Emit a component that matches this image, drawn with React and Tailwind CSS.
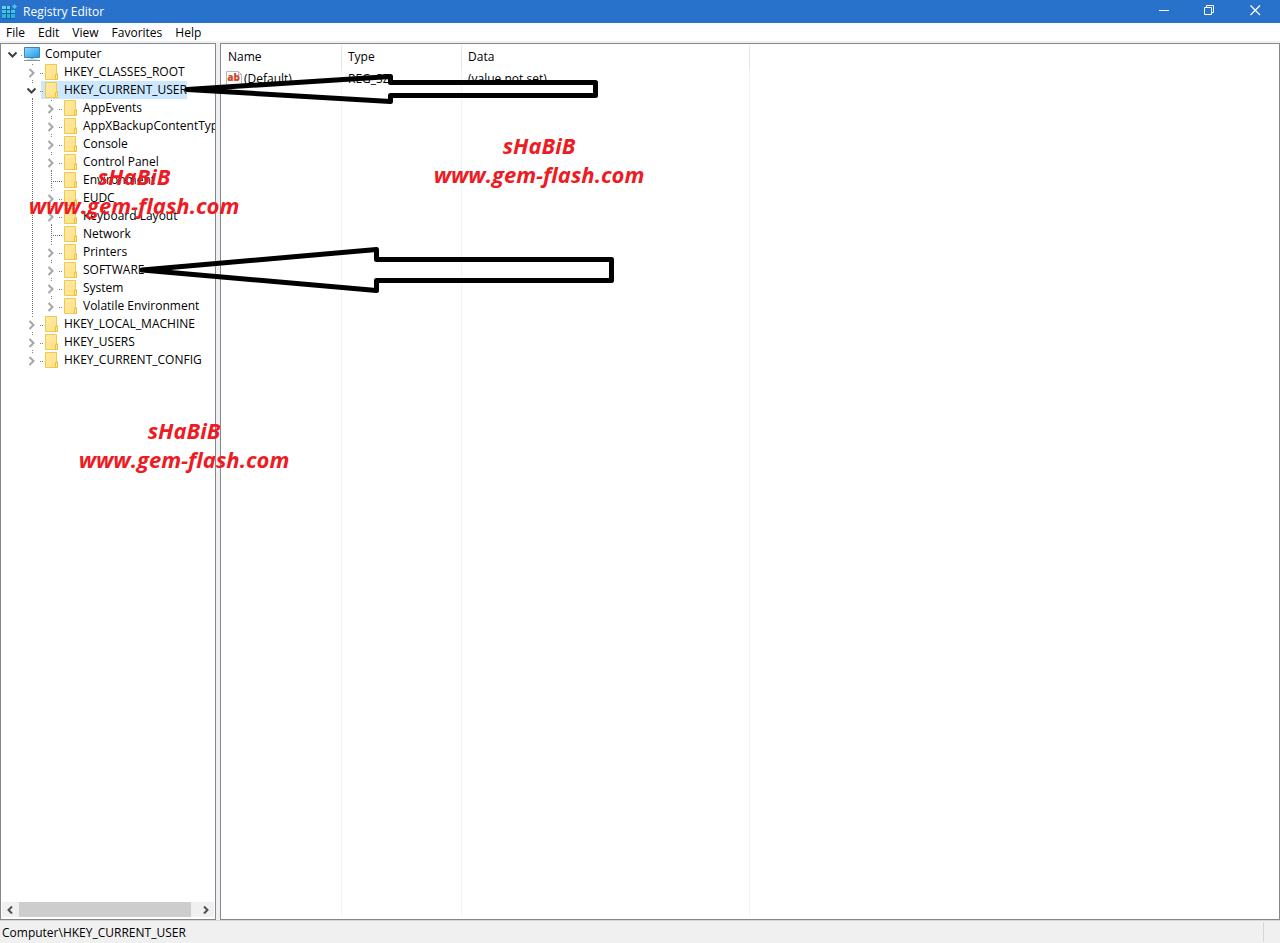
import { useState } from "react";

const CHILDREN = [
  ["AppEvents", true],
  ["AppXBackupContentTyp", true],
  ["Console", true],
  ["Control Panel", true],
  ["Environment", false],
  ["EUDC", true],
  ["Keyboard Layout", true],
  ["Network", false],
  ["Printers", true],
  ["SOFTWARE", true],
  ["System", true],
  ["Volatile Environment", true],
];

const ROWS = [
  { name: "Computer", level: 0, kind: "open" },
  { name: "HKEY_CLASSES_ROOT", level: 1, kind: "closed" },
  { name: "HKEY_CURRENT_USER", level: 1, kind: "open" },
  ...CHILDREN.map(([name, branch], i) => ({
    name,
    level: 2,
    kind: branch ? "closed" : "leaf",
    last: i === CHILDREN.length - 1,
  })),
  { name: "HKEY_LOCAL_MACHINE", level: 1, kind: "closed" },
  { name: "HKEY_USERS", level: 1, kind: "closed" },
  { name: "HKEY_CURRENT_CONFIG", level: 1, kind: "closed", last: true },
];

function RegistryLogo() {
  return (
    <svg className="size-4 shrink-0" viewBox="0 0 16 16" shapeRendering="crispEdges" aria-hidden="true">
      <path d="M1 2h9v4h4v9H1z" fill="#14649c" />
      <path d="M1 2h4v3H1zM6 2h3v3H6z" fill="#5fd3f3" />
      <path d="M1 6h4v3H1zM6 6h3v3H6zM10 6h4v3h-4z" fill="#45c2ea" />
      <path d="M1 10h4v4H1zM6 10h3v4H6zM10 10h4v4h-4z" fill="#2fb2e0" />
      <path d="M13 0h1v1h1v1h1v1h-1v1h-1v1h-1V4h-1V3h-1V2h1V1h1z" fill="#45c2ea" />
    </svg>
  );
}

function ComputerIcon() {
  return (
    <svg className="h-[18px] w-[23px] shrink-0" viewBox="0 0 23 18" aria-hidden="true">
      <defs>
        <linearGradient id="screen" x1="0" y1="0" x2="1" y2="1">
          <stop offset="0" stopColor="#8fdcfc" />
          <stop offset="1" stopColor="#1e9ae8" />
        </linearGradient>
      </defs>
      <path d="M2.500 2.500h15v10h-15z" fill="url(#screen)" stroke="#3a86b8" />
      <path d="M8 13h4v1H8z" fill="#a9bac6" />
      <path d="M5 14h10v1H5z" fill="#d3dde4" />
      <path d="M2 15h16v1H2z" fill="#7f99ab" />
    </svg>
  );
}

function FolderIcon() {
  return (
    <svg className="h-[18px] w-[23px] shrink-0" viewBox="0 0 23 18" aria-hidden="true">
      <defs>
        <linearGradient id="folder" x1="0" y1="0" x2="1" y2="1">
          <stop offset="0" stopColor="#ffeaa3" />
          <stop offset="1" stopColor="#ffdf85" />
        </linearGradient>
      </defs>
      <path d="M1 10h1v1H1z" fill="#808080" />
      <path d="M4.500 1.500h11v9h1v6h-12z" fill="url(#folder)" stroke="#efcb4d" />
      <path d="M14.500 11.500h2v5h-2z" fill="#ffe694" stroke="#e9c23f" />
    </svg>
  );
}

function Guide({ kind, last, level }) {
  return (
    <svg className="h-[18px] w-[19px] shrink-0" viewBox="0 0 19 18" aria-hidden="true">
      {kind === "line" && <path d="M10.500 0v18" stroke="#6b6b6b" strokeDasharray="1 1" fill="none" />}
      {kind === "leaf" && (
        <g stroke="#6b6b6b" strokeDasharray="1 1" fill="none">
          <path d="M10.500 0v18" />
          <path d="M10 10.500h9" />
        </g>
      )}
      {(kind === "open" || kind === "closed") && (
        <g fill="#808080">
          <path d="M18 10h1v1h-1z" />
          {level > 0 && <path d="M10 1h1v1h-1z" />}
          {level > 0 && !last && <path d="M10 17h1v1h-1z" />}
        </g>
      )}
      {kind === "closed" && <path d="M7.500 6 11.500 10l-4 4" fill="none" stroke="#a6a6a6" strokeWidth="2" />}
      {kind === "open" && <path d="M5.500 7.500 9.500 11.500l4-4" fill="none" stroke="#404040" strokeWidth="2" />}
    </svg>
  );
}

function TreeRow({ row, selected, onSelect }) {
  return (
    <li role="treeitem" aria-selected={selected} className="flex h-[18px] items-center">
      {row.level > 0 && <span className="w-[19px] shrink-0" />}
      {row.level > 1 && <Guide kind="line" />}
      {row.kind === "leaf" ? (
        <Guide kind="leaf" />
      ) : (
        <button type="button" aria-label={"Toggle " + row.name} className="shrink-0">
          <Guide kind={row.kind} last={row.last} level={row.level} />
        </button>
      )}
      <button
        type="button"
        onClick={onSelect}
        className={"flex h-[18px] shrink-0 items-center whitespace-nowrap " + (selected ? "bg-[#cce8ff]" : "")}
      >
        {row.level === 0 ? <ComputerIcon /> : <FolderIcon />}
        {row.name}
      </button>
    </li>
  );
}

function TreePanel() {
  const [selected, setSelected] = useState("HKEY_CURRENT_USER");
  return (
    <nav aria-label="Registry keys" className="flex w-[216px] shrink-0 flex-col border border-[#828790] bg-white">
      <ul role="tree" className="min-h-0 flex-1 overflow-hidden pt-px pl-[2px]">
        {ROWS.map((row) => (
          <TreeRow key={row.name} row={row} selected={row.name === selected} onSelect={() => setSelected(row.name)} />
        ))}
      </ul>
      <div className="mx-px mb-[2px] flex h-[15px] bg-[#f0f0f0]">
        <button type="button" aria-label="Scroll left" className="flex w-[17px] items-center pl-1">
          <svg className="size-2" viewBox="0 0 8 8">
            <path d="M6 .5 2.500 4 6 7.500" fill="none" stroke="#505050" strokeWidth="2" />
          </svg>
        </button>
        <div className="flex-1">
          <div className="h-full w-[172px] bg-[#cdcdcd]" />
        </div>
        <button type="button" aria-label="Scroll right" className="flex w-[17px] items-center justify-center">
          <svg className="size-2" viewBox="0 0 8 8">
            <path d="M2 .5 5.500 4 2 7.500" fill="none" stroke="#505050" strokeWidth="2" />
          </svg>
        </button>
      </div>
    </nav>
  );
}

function StringValueIcon() {
  return (
    <svg className="size-4 shrink-0" viewBox="0 0 16 16" aria-hidden="true">
      <path d="M.5.5h12l3 3v12H.5z" fill="#fff" stroke="#b9b9b9" />
      <path d="M12.500.5v3h3" fill="none" stroke="#b9b9b9" />
      <text x="7.500" y="10" textAnchor="middle" fontFamily="Open Sans, sans-serif" fontWeight="800" fontSize="10" fill="#d24726">
        ab
      </text>
    </svg>
  );
}

function ValuesPanel() {
  return (
    <main className="flex min-w-0 flex-1 border border-[#828790] bg-white pt-px pb-[2px]">
      <table className="h-full w-full table-fixed border-separate border-spacing-0 text-left">
        <colgroup>
          <col className="w-[121px]" />
          <col className="w-[120px]" />
          <col className="w-[288px]" />
          <col />
        </colgroup>
        <thead>
          <tr className="h-6">
            <th className="border-r border-[#e5e5e5] p-0 pl-[7px] font-normal">Name</th>
            <th className="border-r border-[#e5e5e5] p-0 pl-[6px] font-normal">Type</th>
            <th className="border-r border-[#e5e5e5] p-0 pl-[6px] font-normal">Data</th>
            <td className="p-0" />
          </tr>
        </thead>
        <tbody>
          <tr className="h-5">
            <td className="border-r border-[#ecf3f9] p-0 pl-[5px]">
              <span className="flex items-center gap-[2px]">
                <StringValueIcon />
                (Default)
              </span>
            </td>
            <td className="border-r border-[#ecf3f9] p-0 pl-[6px]">REG_SZ</td>
            <td className="border-r border-[#ecf3f9] p-0 pl-[6px]">(value not set)</td>
            <td className="p-0" />
          </tr>
          <tr>
            <td className="border-r border-[#ecf3f9] p-0" />
            <td className="border-r border-[#ecf3f9] p-0" />
            <td className="border-r border-[#ecf3f9] p-0" />
            <td className="p-0" />
          </tr>
        </tbody>
      </table>
    </main>
  );
}

function Watermark({ className }) {
  return (
    <p
      className={
        "pointer-events-none absolute flex w-[208px] flex-col items-center text-[22px] leading-[29px] font-bold whitespace-nowrap text-[#ed1c24] italic " +
        className
      }
    >
      <span>sHaBiB</span>
      <span>www.gem-flash.com</span>
    </p>
  );
}

export default function App() {
  return (
    <div className="relative flex h-screen flex-col overflow-hidden bg-[#f0f0f0] font-['Open_Sans',sans-serif] text-[12px] leading-[18px] text-black">
      <header className="flex h-[23px] shrink-0 items-center bg-[#2872cb] pl-px text-white">
        <RegistryLogo />
        <h1 className="flex-1 pl-[6px]">Registry Editor</h1>
        <div className="flex h-full">
          <button type="button" aria-label="Minimize" className="w-[45px] pb-[2px] pl-[17px]">
            <svg className="size-[11px]" viewBox="0 0 11 11">
              <path d="M0 5h10v1H0z" fill="#fff" />
            </svg>
          </button>
          <button type="button" aria-label="Restore" className="w-[46px] pb-[2px] pl-[17px]">
            <svg className="size-[11px]" viewBox="0 0 11 11">
              <path d="M.5 2.500h7v7h-7zM2.500 2.500v-2h7v7h-2" fill="none" stroke="#fff" />
            </svg>
          </button>
          <button type="button" aria-label="Close" className="w-[47px] pb-[2px] pl-[17px]">
            <svg className="size-[11px]" viewBox="0 0 11 11">
              <path d="m.5.5 9.500 9.500M10 .5.5 10" fill="none" stroke="#fff" strokeWidth="1.200" />
            </svg>
          </button>
        </div>
      </header>
      <div role="menubar" className="mb-[2px] flex h-[18px] shrink-0 items-end gap-[13px] bg-white pl-[6px]">
        {["File", "Edit", "View", "Favorites", "Help"].map((item) => (
          <button key={item} type="button" role="menuitem" className="h-[17px]">
            {item}
          </button>
        ))}
      </div>
      <div className="flex min-h-0 flex-1 gap-1">
        <TreePanel />
        <ValuesPanel />
      </div>
      <footer className="flex h-[23px] shrink-0 items-stretch border-t border-[#d7d7d7] pl-[2px]">
        <span className="flex flex-1 items-center pt-[2px]">Computer\HKEY_CURRENT_USER</span>
        <span className="my-px w-[17px] border-l border-[#d7d7d7]" />
      </footer>

      <svg className="pointer-events-none absolute top-0 left-0 h-[320px] w-[640px]" viewBox="0 0 640 320" aria-hidden="true">
        <g fill="none" stroke="#000" strokeWidth="5" strokeLinejoin="round">
          <path d="M187 89.500 390.500 76.500V82.500H595.500V95.500H390.500V101.500Z" />
          <path d="M142 270 376.500 249.500V259.500H611.500V280.500H376.500V290.500Z" />
        </g>
      </svg>
      <Watermark className="top-[131px] left-[435px]" />
      <Watermark className="top-[162px] left-[30px]" />
      <Watermark className="top-[416px] left-[80px]" />
    </div>
  );
}
